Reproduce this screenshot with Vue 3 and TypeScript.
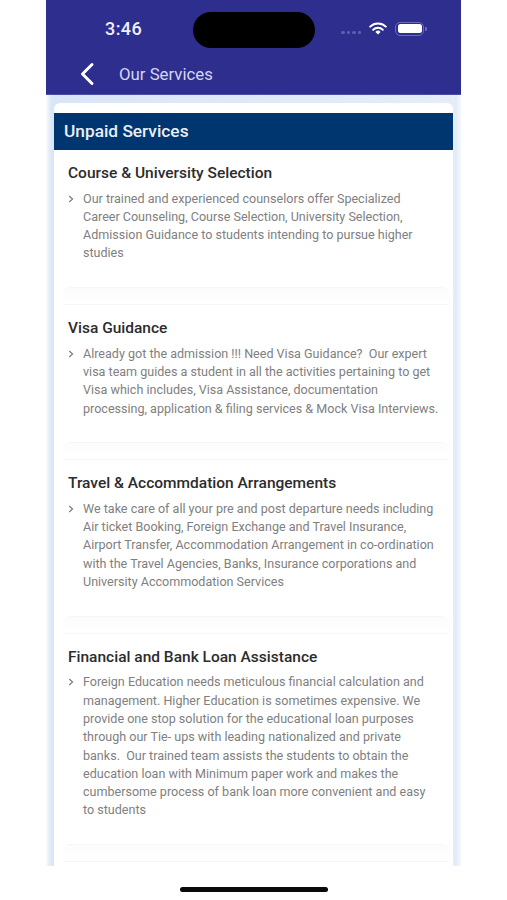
<script setup lang="ts">
interface Service { title: string; lines: string[] }
const services: Service[] = [
  { title: 'Course & University Selection', lines: [
    'Our trained and experienced counselors offer Specialized',
    'Career Counseling, Course Selection, University Selection,',
    'Admission Guidance to students intending to pursue higher',
    'studies'] },
  { title: 'Visa Guidance', lines: [
    'Already got the admission !!! Need Visa Guidance?  Our expert',
    'visa team guides a student in all the activities pertaining to get',
    'Visa which includes, Visa Assistance, documentation',
    'processing, application & filing services & Mock Visa Interviews.'] },
  { title: 'Travel & Accommdation Arrangements', lines: [
    'We take care of all your pre and post departure needs including',
    'Air ticket Booking, Foreign Exchange and Travel Insurance,',
    'Airport Transfer, Accommodation Arrangement in co-ordination',
    'with the Travel Agencies, Banks, Insurance corporations and',
    'University Accommodation Services'] },
  { title: 'Financial and Bank Loan Assistance', lines: [
    'Foreign Education needs meticulous financial calculation and',
    'management. Higher Education is sometimes expensive. We',
    'provide one stop solution for the educational loan purposes',
    'through our Tie- ups with leading nationalized and private',
    'banks.  Our trained team assists the students to obtain the',
    'education loan with Minimum paper work and makes the',
    'cumbersome process of bank loan more convenient and easy',
    'to students'] },
]
</script>

<template>
  <div class="page">
    <div class="phone">
      <header class="top">
        <div class="status">
          <span class="time">3:46</span>
          <span class="island"></span>
          <span class="dots"><i></i><i></i><i></i><i></i></span>
          <svg class="wifi" viewBox="0 0 18 13" width="18" height="13">
            <path d="M1.2 4.6a11.2 11.2 0 0 1 15.6 0" fill="none" stroke="#fff" stroke-width="2" stroke-linecap="round" />
            <path d="M4.2 7.7a7 7 0 0 1 9.6 0" fill="none" stroke="#fff" stroke-width="2" stroke-linecap="round" />
            <path d="M6.4 9.9 9 12.6l2.6-2.7a3.7 3.7 0 0 0-5.2 0z" fill="#fff" />
          </svg>
          <span class="battery"><span class="fill"></span></span>
          <span class="cap"></span>
        </div>
        <div class="nav">
          <svg class="back" viewBox="0 0 16 24" width="16" height="24">
            <path d="M13 2.5 3.5 12l9.5 9.5" fill="none" stroke="#fff" stroke-width="3" stroke-linecap="round" stroke-linejoin="round" />
          </svg>
          <span class="nav-title">Our Services</span>
        </div>
      </header>
      <main class="body">
        <section class="card">
          <h1 class="band">Unpaid Services</h1>
          <article v-for="s in services" :key="s.title" class="item">
            <h2>{{ s.title }}</h2>
            <div class="row">
              <svg class="chev" viewBox="0 0 6 8" width="6" height="8">
                <path d="M1.2 1 4.6 4 1.2 7" fill="none" stroke="#777" stroke-width="1.1" />
              </svg>
              <p><span v-for="l in s.lines" :key="l" class="line">{{ l }}</span></p>
            </div>
          </article>
        </section>
      </main>
    </div>
    <div class="home"></div>
  </div>
</template>

<style>
html, body { margin: 0; background: #fff; }
</style>

<style scoped>
.page {
  width: 507px;
  height: 900px;
  overflow: hidden;
  display: flex;
  flex-direction: column;
  align-items: center;
  background: #fff;
  font-family: Roboto, "Liberation Sans", sans-serif;
  position: relative;
}
.phone {
  width: 415px;
  height: 866px;
  display: flex;
  flex-direction: column;
  overflow: hidden;
}
.top {
  height: 95px;
  flex: none;
  background: #2e2e8f;
  color: #fff;
  box-sizing: border-box;
  border-bottom: 1px solid #4a4fa6;
}
.status {
  height: 57px;
  display: flex;
  align-items: center;
  box-sizing: border-box;
  padding: 0 0 0 59px;
}
.time {
  font-size: 18px;
  font-weight: 500;
  width: 88px;
  letter-spacing: 0.4px;
  color: #f0f0f8;
}
.island {
  width: 122px;
  height: 36px;
  border-radius: 18px;
  background: #000;
  flex: none;
  margin-top: 2px;
}
.dots {
  display: flex;
  gap: 2px;
  margin-left: 26px;
  margin-top: 8px;
  width: 28px;
}
.dots i {
  width: 3.5px;
  height: 3px;
  border-radius: 50%;
  background: #5f60ad;
}
.wifi { margin-top: -1px; flex: none; }
.battery {
  margin-left: 8px;
  width: 29px;
  height: 14px;
  box-sizing: border-box;
  border: 1.5px solid #6a6cb8;
  border-radius: 5px;
  padding: 1.5px;
  display: flex;
  flex: none;
}
.fill { flex: 1; background: #fff; border-radius: 2.5px; }
.cap { width: 1.5px; height: 4px; margin-left: 1px; background: #6a6cb8; border-radius: 1px; }
.nav {
  display: flex;
  align-items: center;
  height: 34px;
  padding-left: 33px;
}
.back { flex: none; }
.nav-title {
  margin-left: 24px;
  font-size: 16.8px;
  color: #d4d6ef;
}
.body {
  flex: 1;
  min-height: 0;
  padding: 8px 8px 0;
  overflow: hidden;
  background: linear-gradient(90deg, #fcfdfe 0, #e6eefa 3px, #d9e6f7 6px, #d9e6f7 8px, #e4edf8 calc(100% - 8px), #e2ecf8 calc(100% - 5px), #f6f9fd 100%);
}
.card {
  background: #fff;
  border-radius: 6px 6px 0 0;
  padding-top: 10px;
  height: 100%;
  overflow: hidden;
}
.band {
  margin: 0;
  height: 37px;
  line-height: 36px;
  padding-left: 10px;
  background: #00366f;
  color: #e9eff7;
  font-size: 17.3px;
  font-weight: 500;
  box-sizing: border-box;
}
.item {
  margin: 0 10px 17px 14px;
  border-bottom: 1px solid #f6f6f6;
  padding-top: 13px;
  padding-bottom: 24.5px;
  position: relative;
}
.item::after {
  content: "";
  position: absolute;
  left: -4px;
  right: -6px;
  bottom: -18px;
  height: 17px;
  box-sizing: border-box;
  border-bottom: 1px solid #f6f6f6;
  background: linear-gradient(180deg, #fcfcfc, #fff);
}
h2 {
  margin: 0;
  font-size: 15.5px;
  line-height: 20px;
  font-weight: 500;
  color: #2c2c2c;
}
.row {
  display: flex;
  margin-top: 6.5px;
}
.chev { flex: none; margin-top: 5px; }
p {
  margin: 0 0 0 9px;
  font-size: 12.55px;
  line-height: 18.3px;
  color: #808080;
}
.line { display: block; white-space: pre; }
.home {
  position: absolute;
  left: 180px;
  top: 887px;
  width: 148px;
  height: 5px;
  border-radius: 3px;
  background: #0a0a0a;
}
</style>
